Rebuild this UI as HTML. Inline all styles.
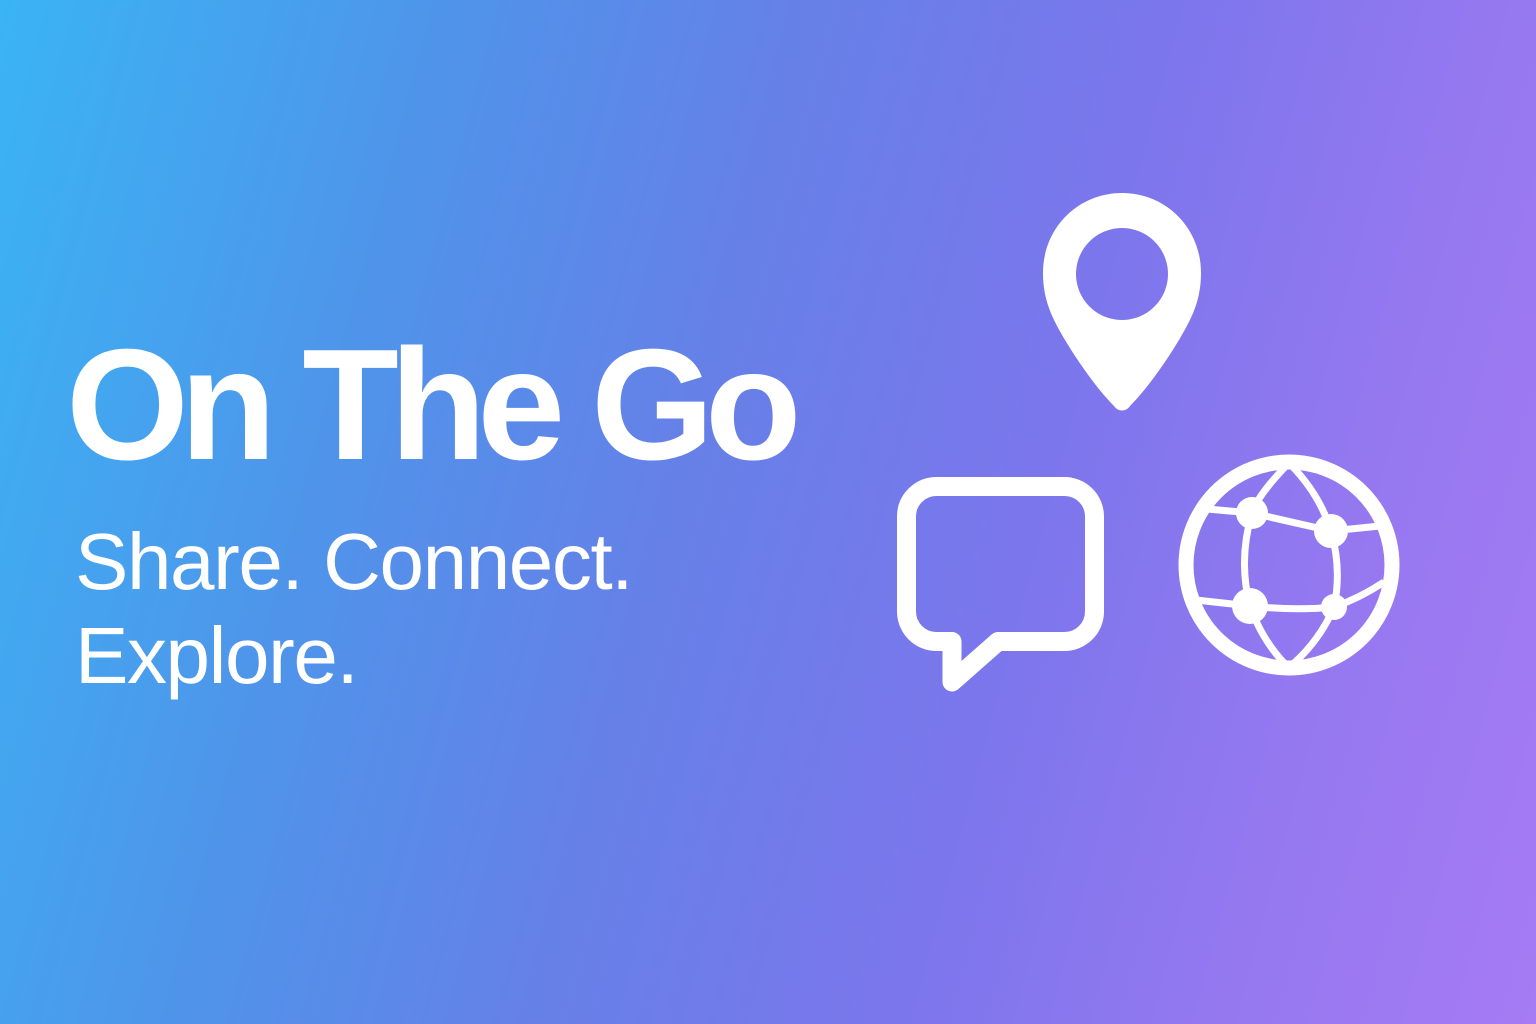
<!DOCTYPE html>
<html><head><meta charset="utf-8"><style>
html,body{margin:0;padding:0}
body{width:1536px;height:1024px;overflow:hidden;position:relative;
background:linear-gradient(105deg,#3ab4f4 0%,#4f94ea 25%,#6680e8 45%,#7c76ec 65%,#9478f0 82%,#a67bf4 100%);
font-family:"Liberation Sans",sans-serif;color:#fff}
h1{position:absolute;left:66px;top:326px;margin:0;font-size:158px;font-weight:bold;letter-spacing:-9px;line-height:1;white-space:nowrap}
p{position:absolute;left:75px;top:515px;margin:0;font-size:80px;letter-spacing:-1.4px;line-height:94px}
svg{position:absolute;left:0;top:0}
</style></head><body>
<h1>On The Go</h1>
<p>Share. Connect.<br>Explore.</p>
<svg width="1536" height="1024" viewBox="0 0 1536 1024">
<path fill="#fff" fill-rule="evenodd" d="M1122 193 C1078 193 1043 228 1043 273 C1043 300 1052 318 1065 340 C1082 368 1100 392 1114 406 C1118 412 1126 412 1130 406 C1144 392 1162 368 1179 340 C1192 318 1201 300 1201 273 C1201 228 1166 193 1122 193 Z M1122 228 A46 46 0 1 0 1122.01 228 Z"/>
<path fill="none" stroke="#fff" stroke-width="19" stroke-linejoin="round" d="M946 486.5 H1064 A30 30 0 0 1 1094.5 516.5 V611 A30 30 0 0 1 1064 641.5 H998 L952 682 V641.5 H936 A30 30 0 0 1 906.5 611 V516.5 A30 30 0 0 1 936 486.5 Z"/>
<g fill="none" stroke="#fff">
<circle cx="1289" cy="565" r="103" stroke-width="15"/>
<path stroke-width="7" d="M1207 509 L1252 513 L1331 531 L1380 526"/>
<path stroke-width="7" d="M1196 600 L1250 606 Q1295 611 1334 607 Q1360 598 1384 582"/>
<path stroke-width="7" d="M1287 465 Q1258 495 1252 513 Q1238 560 1250 606 Q1262 640 1285 664"/>
<path stroke-width="7" d="M1291 465 Q1320 495 1331 531 Q1342 570 1334 607 Q1320 640 1293 664"/>
</g>
<g fill="#fff">
<circle cx="1252" cy="513" r="16"/><circle cx="1331" cy="531" r="17"/>
<circle cx="1250" cy="606" r="18"/><circle cx="1334" cy="607" r="13"/>
</g>
</svg>
</body></html>
